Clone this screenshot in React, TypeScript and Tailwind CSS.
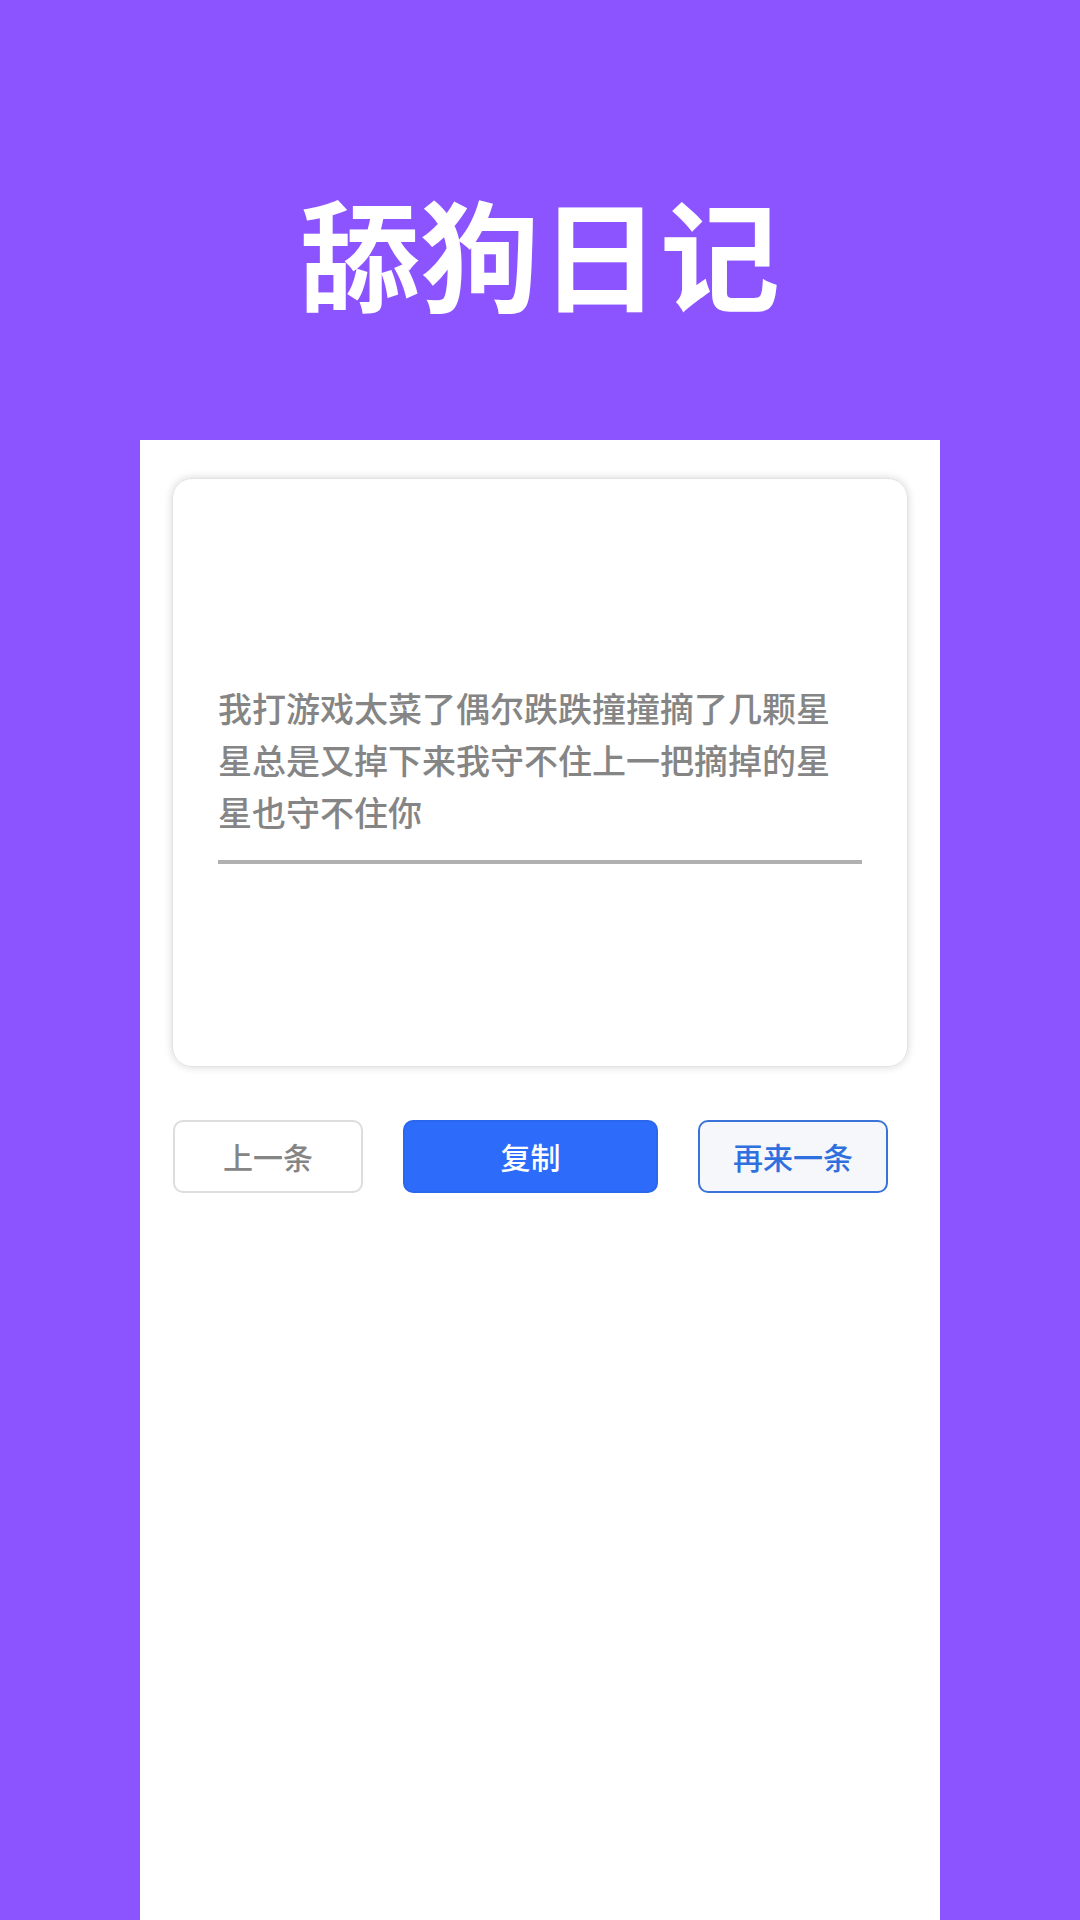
export default function App() {
  return (
    <div
      className="min-h-[1920px] w-[1080px] bg-[#8c54ff] flex flex-col items-center"
      style={{ fontFamily: '"Noto Sans CJK SC", "Noto Sans", sans-serif' }}
    >
      {/* Header */}
      <div className="h-[440px] w-full flex justify-center pt-[191px]">
        <h1 className="text-[120px] leading-none font-bold text-white">舔狗日记</h1>
      </div>

      {/* Panel */}
      <main className="w-[800px] flex-1 min-h-[1480px] bg-white px-8 pt-[38px]">
        <div className="h-[589px] rounded-[20px] border border-[#e2e2e2] shadow-[0_0_8px_rgba(0,0,0,0.16)] flex flex-col justify-center px-[45px]">
          <p className="w-[630px] text-[34px] leading-[52px] font-medium text-[#858585]">
            我打游戏太菜了偶尔跌跌撞撞摘了几颗星星总是又掉下来我守不住上一把摘掉的星星也守不住你
          </p>
          <div className="mt-[22px] h-[4px] w-full bg-[#b0b0b0]" />
        </div>

        <div className="mt-[53px] flex gap-10 pl-px">
          <button className="w-[190px] h-[73px] rounded-[10px] border-2 border-[#dddddd] bg-white text-[30px] font-medium text-[#858585]">
            上一条
          </button>
          <button className="w-[255px] h-[73px] rounded-[10px] border-2 border-[#2a66ee] bg-[#2d6cfb] text-[30px] font-medium text-white">
            复制
          </button>
          <button className="w-[190px] h-[73px] rounded-[10px] border-2 border-[#3b74d9] bg-[#f5f7fa] text-[30px] font-medium text-[#2f6fde]">
            再来一条
          </button>
        </div>
      </main>
    </div>
  );
}
